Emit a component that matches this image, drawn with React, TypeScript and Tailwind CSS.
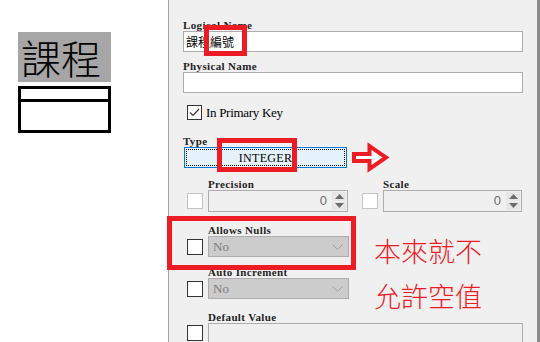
const serif = "[font-family:'Liberation_Serif',serif]";
const cjk = "[font-family:'Noto_Sans_CJK_TC',sans-serif]";
const label =
  "block h-[12px] text-[11px] leading-[12px] font-bold tracking-[0.35px] text-[#1f1f1f] whitespace-nowrap [font-family:'Liberation_Serif',serif]";

function Box({ dim = false }: { dim?: boolean }) {
  return (
    <div
      className={
        dim
          ? "w-[16px] h-[16px] shrink-0 border border-[#c4c4c4] bg-white"
          : "w-[16px] h-[16px] shrink-0 border border-[#333] bg-white"
      }
    />
  );
}

function Spin({ width }: { width: string }) {
  return (
    <div className={`${width} h-[22px] flex border border-[#adadad] bg-[#f0f0f0]`}>
      <div className="flex-1 flex items-center justify-end pr-[4px] text-[13px] text-[#6d6d6d] [font-family:'Liberation_Sans',sans-serif]">
        0
      </div>
      <div className="w-[16px] flex flex-col gap-px p-px">
        <div className="flex-1 bg-[#e6e6e6] flex items-center justify-center">
          <svg width="9" height="5" viewBox="0 0 9 5">
            <path d="M0 5 L4.5 0 L9 5 Z" fill="#6d6d6d" />
          </svg>
        </div>
        <div className="flex-1 bg-[#e6e6e6] flex items-center justify-center">
          <svg width="9" height="5" viewBox="0 0 9 5">
            <path d="M0 0 L4.5 5 L9 0 Z" fill="#6d6d6d" />
          </svg>
        </div>
      </div>
    </div>
  );
}

function Select() {
  return (
    <div className="w-[141px] h-[21px] flex items-center border border-[#adadad] bg-[#cccccc] pl-[4px] pr-[5px]">
      <span className={`flex-1 text-[13px] text-[#7d7d7d] ${serif}`}>No</span>
      <svg width="11" height="6" viewBox="0 0 11 6">
        <path d="M0.5 0.5 L5.5 5.5 L10.5 0.5" fill="none" stroke="#a0a0a0" strokeWidth="1" />
      </svg>
    </div>
  );
}

export default function App() {
  return (
    <div className="relative w-[540px] h-[342px] overflow-hidden bg-white flex">
      {/* left: entity sketch */}
      <div className="w-[168px] shrink-0 pl-[18px] pt-[32px] flex flex-col gap-[4px]">
        <div className={`w-[93px] h-[50px] bg-[#a6a6a6] flex items-center pl-[3px] text-[40px] leading-none font-light text-black ${cjk}`}>
          課程
        </div>
        <div className="w-[93px] h-[47px] border-[3px] border-black flex flex-col">
          <div className="h-[13px] border-b-[3px] border-black" />
          <div className="flex-1" />
        </div>
      </div>

      {/* right: column properties panel */}
      <div className="w-[372px] shrink-0 h-full overflow-hidden bg-[#f0f0f0] border-l border-[#a3a3a3] border-r-[3px] border-r-[#8c8c8c] pl-[14px] pr-[14px] pt-[19px]">
        <span className={label}>Logical Name</span>
        <div className={`h-[21px] border border-[#adadad] bg-white flex items-center pl-[2px] text-[12px] text-black ${cjk}`}>
          課程編號
        </div>

        <span className={`${label} mt-[8px]`}>Physical Name</span>
        <div className="h-[21px] border border-[#adadad] bg-white" />

        <div className="mt-[12px] ml-[4px] flex items-center gap-[4px] h-[15px]">
          <div className="w-[15px] h-[15px] border border-[#333] bg-white flex items-center justify-center">
            <svg width="11" height="9" viewBox="0 0 11 9">
              <path d="M1 4.5 L4 7.5 L10 1" fill="none" stroke="#333" strokeWidth="1.2" />
            </svg>
          </div>
          <span className={`text-[13px] tracking-[-0.3px] text-black ${serif}`}>In Primary Key</span>
        </div>

        <span className={`${label} mt-[15px]`}>Type</span>
        <div className="ml-px w-[163px] h-[21px] border border-[#0078d7] bg-[#e5f1fb] p-px">
          <div className={`h-full border border-dotted border-black flex items-center justify-center text-[12px] tracking-[0.3px] text-black ${serif}`}>
            INTEGER
          </div>
        </div>

        {/* precision / scale */}
        <div className="mt-[10px] ml-[4px] flex items-end">
          <div className="flex items-end gap-[5px]">
            <div className="mb-[3px]">
              <Box dim />
            </div>
            <div className="flex flex-col">
              <span className={label}>Precision</span>
              <Spin width="w-[140px]" />
            </div>
          </div>
          <div className="ml-[14px] flex items-end gap-[5px]">
            <div className="mb-[3px]">
              <Box dim />
            </div>
            <div className="flex flex-col">
              <span className={label}>Scale</span>
              <Spin width="w-[139px]" />
            </div>
          </div>
        </div>

        <div className="mt-[12px] ml-[4px] flex items-end gap-[5px]">
          <div className="mb-[2px]">
            <Box />
          </div>
          <div className="flex flex-col">
            <span className={label}>Allows Nulls</span>
            <Select />
          </div>
        </div>

        <div className="mt-[9px] ml-[4px] flex items-end gap-[5px]">
          <div className="mb-[2px]">
            <Box />
          </div>
          <div className="flex flex-col">
            <span className={label}>Auto Increment</span>
            <Select />
          </div>
        </div>

        <div className="mt-[12px] ml-[4px] flex items-start gap-[5px]">
          <div className="mt-[14px]">
            <Box />
          </div>
          <div className="flex-1 flex flex-col">
            <span className={label}>Default Value</span>
            <div className="h-[24px] border border-[#adadad] bg-[#f0f0f0]" />
          </div>
        </div>
      </div>

      {/* annotations */}
      <div className="absolute left-[204px] top-[25px] w-[43px] h-[31px] border-[5px] border-[#ed1c24]" />
      <div className="absolute left-[217px] top-[138px] w-[80px] h-[34px] border-[5px] border-[#ed1c24]" />
      <div className="absolute left-[167px] top-[216px] w-[189px] h-[54px] border-[5px] border-[#ed1c24]" />
      <svg className="absolute left-[350px] top-[141px]" width="42" height="34" viewBox="0 0 42 34">
        <path
          d="M4 13 L19.5 13 L19.5 5 L36 16.5 L19.5 28 L19.5 20 L4 20 Z"
          fill="white"
          stroke="#ed1c24"
          strokeWidth="4"
          strokeLinejoin="miter"
        />
      </svg>
      <div className={`absolute left-[374px] top-[228px] text-[27px] leading-[45px] font-light text-[#ed1c24] ${cjk}`}>
        <div>本來就不</div>
        <div>允許空值</div>
      </div>
    </div>
  );
}
